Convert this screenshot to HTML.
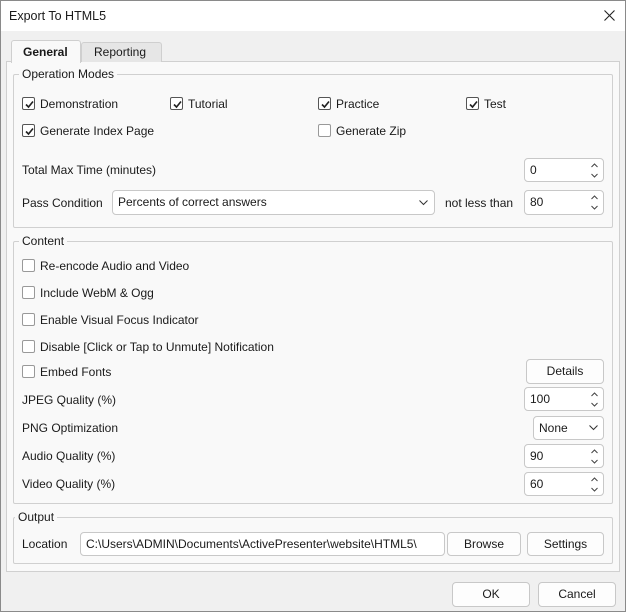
<!DOCTYPE html>
<html><head><meta charset="utf-8"><style>
*{box-sizing:border-box;margin:0;padding:0}
body{width:626px;height:612px;overflow:hidden;background:#f0f0f0;font-family:"Liberation Sans",sans-serif;font-size:12px;color:#1a1a1a;position:relative}
.a{position:absolute}
.win{left:0;top:0;width:626px;height:612px;border:1px solid #8a8a8a}
.title{left:1px;top:1px;width:624px;height:30px;background:#fff}
.pane{left:6px;top:61px;width:614px;height:511px;background:#f9f9f9;border:1px solid #d0d0d0}
.grp{border:1px solid #d0d0d0;border-radius:2px}
.gl{background:#f9f9f9;padding:0 3px;line-height:14px}
.t{line-height:14px;white-space:nowrap}
.cb{width:13px;height:13px;border:1px solid #555;border-radius:2px;background:#fff}
.cb.u{border-color:#999}
.cb svg{position:absolute;left:1px;top:1px}
.box{background:#fff;border:1px solid #c8c8c8;border-radius:4px;padding-left:5px;line-height:23px}
.btn{background:#fdfdfd;border:1px solid #c8c8c8;border-radius:4px;text-align:center;line-height:22px}
.sp{position:absolute;right:5px;top:4px}
</style></head><body>
<div class="a win"></div>
<div class="a title"></div>
<div class="a t" style="left:9px;top:9px;font-size:12.5px">Export To HTML5</div>
<svg class="a" style="left:604px;top:10px" width="11" height="11"><path d="M0.5 0.5L10.5 10.5M10.5 0.5L0.5 10.5" stroke="#222" stroke-width="1.1"/></svg>

<div class="a pane"></div>
<div class="a" style="left:81px;top:42px;width:81px;height:20px;background:#e6e6e6;border:1px solid #cfcfcf;border-bottom:none;border-radius:3px 3px 0 0"></div>
<div class="a t" style="left:94px;top:45px">Reporting</div>
<div class="a" style="left:11px;top:40px;width:70px;height:23px;background:#f9f9f9;border:1px solid #cfcfcf;border-bottom:none;border-radius:3px 3px 0 0"></div>
<div class="a t" style="left:23px;top:45px;font-weight:bold">General</div>

<div class="a grp" style="left:13px;top:74px;width:600px;height:154px"></div>
<div class="a gl" style="left:19px;top:67px">Operation Modes</div>

<div class="a cb" style="left:22px;top:97px"><svg width="11" height="11"><path d="M2 5.5L4.5 8L9 2.5" fill="none" stroke="#222" stroke-width="1.6"/></svg></div>
<div class="a t" style="left:40px;top:97px">Demonstration</div>
<div class="a cb" style="left:170px;top:97px"><svg width="11" height="11"><path d="M2 5.5L4.5 8L9 2.5" fill="none" stroke="#222" stroke-width="1.6"/></svg></div>
<div class="a t" style="left:188px;top:97px">Tutorial</div>
<div class="a cb" style="left:318px;top:97px"><svg width="11" height="11"><path d="M2 5.5L4.5 8L9 2.5" fill="none" stroke="#222" stroke-width="1.6"/></svg></div>
<div class="a t" style="left:336px;top:97px">Practice</div>
<div class="a cb" style="left:466px;top:97px"><svg width="11" height="11"><path d="M2 5.5L4.5 8L9 2.5" fill="none" stroke="#222" stroke-width="1.6"/></svg></div>
<div class="a t" style="left:484px;top:97px">Test</div>
<div class="a cb" style="left:22px;top:124px"><svg width="11" height="11"><path d="M2 5.5L4.5 8L9 2.5" fill="none" stroke="#222" stroke-width="1.6"/></svg></div>
<div class="a t" style="left:40px;top:124px">Generate Index Page</div>
<div class="a cb u" style="left:318px;top:124px"></div>
<div class="a t" style="left:336px;top:124px">Generate Zip</div>

<div class="a t" style="left:22px;top:163px">Total Max Time (minutes)</div>
<div class="a box" style="left:524px;top:158px;width:80px;height:24px;line-height:22px">0<svg class="sp" width="7" height="15"><path d="M0.5 4L3.5 1L6.5 4M0.5 11L3.5 14L6.5 11" fill="none" stroke="#444"/></svg></div>
<div class="a t" style="left:22px;top:196px">Pass Condition</div>
<div class="a box" style="left:112px;top:190px;width:323px;height:25px">Percents of correct answers<svg class="a" style="right:6px;top:9px" width="9" height="6"><path d="M0.5 0.5L4.5 4.5L8.5 0.5" fill="none" stroke="#333"/></svg></div>
<div class="a t" style="left:445px;top:196px">not less than</div>
<div class="a box" style="left:524px;top:190px;width:80px;height:25px">80<svg class="sp" width="7" height="15"><path d="M0.5 4L3.5 1L6.5 4M0.5 11L3.5 14L6.5 11" fill="none" stroke="#444"/></svg></div>

<div class="a grp" style="left:13px;top:241px;width:600px;height:263px"></div>
<div class="a gl" style="left:19px;top:234px">Content</div>
<div class="a cb u" style="left:22px;top:259px"></div><div class="a t" style="left:40px;top:259px">Re-encode Audio and Video</div>
<div class="a cb u" style="left:22px;top:286px"></div><div class="a t" style="left:40px;top:286px">Include WebM &amp; Ogg</div>
<div class="a cb u" style="left:22px;top:313px"></div><div class="a t" style="left:40px;top:313px">Enable Visual Focus Indicator</div>
<div class="a cb u" style="left:22px;top:340px"></div><div class="a t" style="left:40px;top:340px">Disable [Click or Tap to Unmute] Notification</div>
<div class="a cb u" style="left:22px;top:365px"></div><div class="a t" style="left:40px;top:365px">Embed Fonts</div>
<div class="a btn" style="left:526px;top:359px;width:78px;height:25px">Details</div>
<div class="a t" style="left:22px;top:393px">JPEG Quality (%)</div>
<div class="a box" style="left:524px;top:387px;width:80px;height:24px;line-height:22px">100<svg class="sp" width="7" height="15"><path d="M0.5 4L3.5 1L6.5 4M0.5 11L3.5 14L6.5 11" fill="none" stroke="#444"/></svg></div>
<div class="a t" style="left:22px;top:421px">PNG Optimization</div>
<div class="a box" style="left:533px;top:416px;width:71px;height:24px;line-height:22px">None<svg class="a" style="right:5px;top:8px" width="9" height="6"><path d="M0.5 0.5L4.5 4.5L8.5 0.5" fill="none" stroke="#333"/></svg></div>
<div class="a t" style="left:22px;top:449px">Audio Quality (%)</div>
<div class="a box" style="left:524px;top:444px;width:80px;height:24px;line-height:22px">90<svg class="sp" width="7" height="15"><path d="M0.5 4L3.5 1L6.5 4M0.5 11L3.5 14L6.5 11" fill="none" stroke="#444"/></svg></div>
<div class="a t" style="left:22px;top:477px">Video Quality (%)</div>
<div class="a box" style="left:524px;top:472px;width:80px;height:24px;line-height:22px">60<svg class="sp" width="7" height="15"><path d="M0.5 4L3.5 1L6.5 4M0.5 11L3.5 14L6.5 11" fill="none" stroke="#444"/></svg></div>

<div class="a grp" style="left:13px;top:517px;width:600px;height:47px"></div>
<div class="a gl" style="left:15px;top:510px">Output</div>
<div class="a t" style="left:22px;top:537px">Location</div>
<div class="a box" style="left:80px;top:532px;width:365px;height:24px;line-height:22px">C:\Users\ADMIN\Documents\ActivePresenter\website\HTML5\</div>
<div class="a btn" style="left:447px;top:532px;width:74px;height:24px">Browse</div>
<div class="a btn" style="left:527px;top:532px;width:77px;height:24px">Settings</div>

<div class="a btn" style="left:452px;top:582px;width:78px;height:25px">OK</div>
<div class="a btn" style="left:538px;top:582px;width:78px;height:25px">Cancel</div>
</body></html>
